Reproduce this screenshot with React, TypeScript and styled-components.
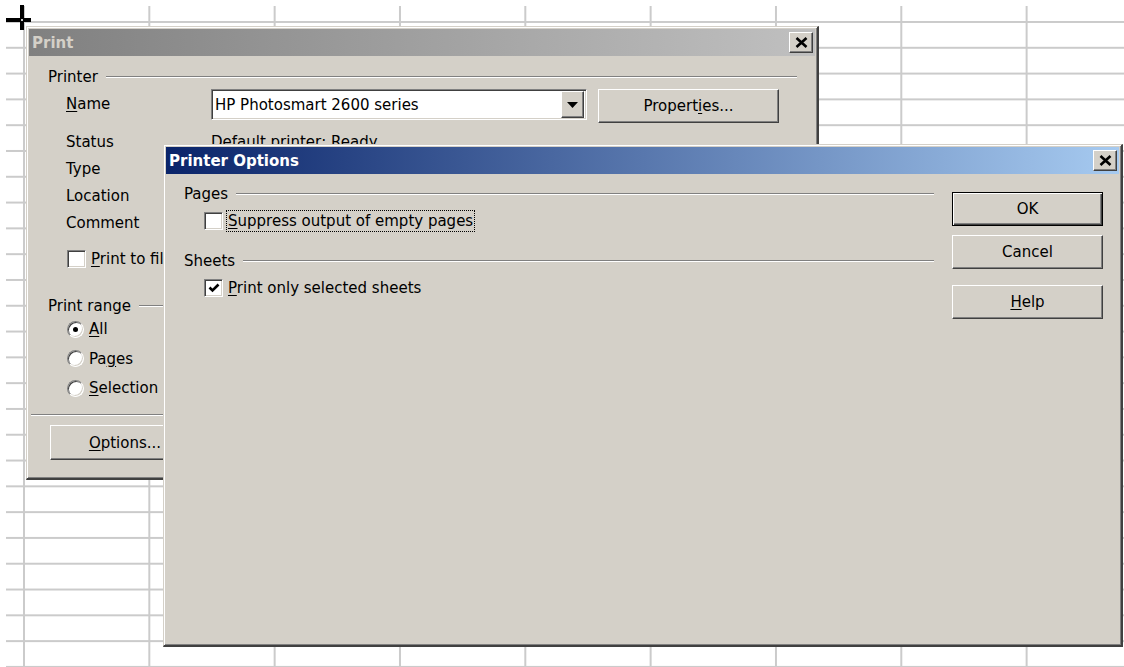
import React from 'react';
import styled, { createGlobalStyle, css } from 'styled-components';

const face = '#d4d0c8';
const shadow = '#808080';
const darkShadow = '#404040';

const GlobalStyle = createGlobalStyle`
  html, body {
    margin: 0;
    padding: 0;
    overflow: hidden;
    background: #fff;
  }

  body {
    font-family: "DejaVu Sans", "Liberation Sans", sans-serif;
    font-size: 15px;
    color: #000;
  }
`;

const Sheet = styled.div`
  position: relative;
  width: 1124px;
  height: 667px;
  overflow: hidden;
  background: #fff;
`;

/* spreadsheet cells behind the dialogs */
const Cells = styled.div`
  margin: 6px 0 0 6px;
  height: 661px;
  background-image:
    linear-gradient(to right, #cbcbcb 0 2px, transparent 2px),
    linear-gradient(to bottom, #cbcbcb 0 2px, transparent 2px);
  background-size: 125.33px 100%, 100% 25.8px;
  background-position: 17px 0, 0 15px;
  background-repeat: repeat-x, repeat-y;
`;

const Cursor = styled.svg`
  position: absolute;
  left: 4px;
  top: 3px;
`;

const Window = styled.section<{ $x: number; $y: number; $w: number; $h: number }>`
  position: absolute;
  left: ${p => p.$x}px;
  top: ${p => p.$y}px;
  width: ${p => p.$w}px;
  height: ${p => p.$h}px;
  box-sizing: border-box;
  display: flex;
  flex-direction: column;
  padding: 2px;
  background: ${face};
  border: 1px solid;
  border-width: 1px 2px 2px 1px;
  border-color: ${face} ${darkShadow} ${darkShadow} ${face};
  box-shadow: inset 1px 1px #fff, inset -1px -1px ${shadow};
`;

const TitleBar = styled.header<{ $active?: boolean }>`
  display: flex;
  align-items: center;
  justify-content: space-between;
  height: 27px;
  flex-shrink: 0;
  padding: 0 2px 0 3px;
  font-weight: bold;
  font-size: 15px;
  color: ${p => (p.$active ? '#fff' : face)};
  background: ${p =>
    p.$active
      ? 'linear-gradient(to right, #0a246a, #a6caf0)'
      : 'linear-gradient(to right, #808080, #c0c0c0)'};
`;

const raised = css`
  box-sizing: border-box;
  background: ${face};
  border: 1px solid;
  border-color: #fff ${darkShadow} ${darkShadow} #fff;
  box-shadow: inset -1px -1px ${shadow};
`;

const sunken = css`
  box-sizing: border-box;
  background: #fff;
  border: 1px solid;
  border-color: ${shadow} #fff #fff ${shadow};
  box-shadow: inset 1px 1px ${darkShadow}, inset -1px -1px ${face};
`;

const CloseButton = styled.button`
  ${raised};
  width: 24px;
  height: 21px;
  padding: 0;
  display: flex;
  align-items: center;
  justify-content: center;
`;

const Button = styled.button<{ $w?: number; $h?: number; $default?: boolean; $space?: number }>`
  ${raised};
  width: ${p => p.$w ?? 151}px;
  height: ${p => p.$h ?? 34}px;
  margin-top: ${p => p.$space ?? 0}px;
  padding: 0;
  font: inherit;
  color: #000;
  flex-shrink: 0;
  ${p =>
    p.$default &&
    css`
      border-color: #000;
      box-shadow: inset 1px 1px #fff, inset -1px -1px ${darkShadow}, inset -2px -2px ${shadow};
    `}
`;

const Key = styled.u`
  text-decoration-thickness: 1px;
  text-underline-offset: 2px;
`;

/* group frame heading with etched rule */
const GroupHead = styled.div<{ $space?: number }>`
  display: flex;
  align-items: center;
  gap: 8px;
  height: 18px;
  line-height: 18px;
  margin-top: ${p => p.$space ?? 0}px;
  white-space: nowrap;

  &::after {
    content: '';
    flex: 1;
    border-top: 1px solid ${shadow};
    border-bottom: 1px solid #fff;
  }
`;

const OptionRow = styled.label<{ $space?: number; $indent?: number }>`
  display: flex;
  align-items: center;
  gap: 5px;
  height: 22px;
  margin-top: ${p => p.$space ?? 0}px;
  margin-left: ${p => p.$indent ?? 0}px;
  white-space: nowrap;
`;

const Box = styled.span`
  ${sunken};
  width: 19px;
  height: 18px;
  flex-shrink: 0;
  display: flex;
  align-items: center;
  justify-content: center;
`;

const Radio = styled.span<{ $on?: boolean }>`
  ${sunken};
  width: 17px;
  height: 17px;
  border-radius: 50%;
  flex-shrink: 0;
  display: flex;
  align-items: center;
  justify-content: center;

  &::after {
    content: '';
    width: 5px;
    height: 5px;
    border-radius: 50%;
    background: ${p => (p.$on ? '#000' : 'transparent')};
  }
`;

const Focus = styled.span`
  outline: 1px dotted #000;
  outline-offset: 1px;
`;

/* ---- Print dialog ---- */

const PrintBody = styled.div`
  display: flex;
  flex-direction: column;
  padding: 12px 18px 0 19px;
`;

const NameRow = styled.div`
  display: flex;
  align-items: flex-start;
  margin: 3px 0 0 18px;
`;

const FieldLabel = styled.span<{ $w?: number; $lh?: number }>`
  width: ${p => p.$w ?? 145}px;
  line-height: ${p => p.$lh ?? 27}px;
  flex-shrink: 0;
  white-space: nowrap;
`;

const Combo = styled.div`
  ${sunken};
  width: 376px;
  height: 31px;
  display: flex;
  align-items: center;
  justify-content: space-between;
  padding: 2px 2px 2px 3px;
`;

const ComboArrow = styled.span`
  ${raised};
  width: 23px;
  height: 27px;
  display: flex;
  align-items: center;
  justify-content: center;
`;

const InfoGrid = styled.div`
  display: grid;
  grid-template-columns: 145px 1fr;
  grid-auto-rows: 27px;
  align-items: center;
  margin: 5px 0 0 18px;
  white-space: nowrap;
`;

const RadioList = styled.div`
  display: flex;
  flex-direction: column;
  gap: 7.5px;
  margin: 3px 0 0 19px;
`;

const Separator = styled.hr`
  margin: 15px -17px 0 -17px;
  height: 0;
  border: 0;
  border-top: 1px solid ${shadow};
  border-bottom: 1px solid #fff;
`;

/* ---- Printer Options dialog ---- */

const OptionsBody = styled.div`
  display: flex;
  gap: 18px;
  padding: 11px 16px 0 18px;
`;

const OptionGroups = styled.div`
  flex: 1;
  display: flex;
  flex-direction: column;
`;

const ButtonStack = styled.div`
  display: flex;
  flex-direction: column;
  padding-top: 7px;
`;

const CloseGlyph = () => (
  <svg width="13" height="11" viewBox="0 0 13 11">
    <path d="M1.5 1 11.5 10M11.5 1 1.5 10" stroke="#000" strokeWidth="2.6" fill="none" />
  </svg>
);

const Check = ({ checked }: { checked?: boolean }) => (
  <Box>
    {checked && (
      <svg width="12" height="12" viewBox="0 0 12 12">
        <path d="M1.5 5.5 4.5 8.5 10.5 2.5" stroke="#000" strokeWidth="2.6" fill="none" />
      </svg>
    )}
  </Box>
);

const App = () => (
  <Sheet>
    <GlobalStyle />
    <Cells />

    <Cursor width="28" height="28" viewBox="0 0 28 28">
      <rect x="2" y="15" width="25" height="4" fill="#000" />
      <rect x="16" y="2" width="4" height="25" fill="#000" />
      <rect x="17" y="16" width="2" height="2" fill="#ccc" />
    </Cursor>

    <Window $x={26} $y={26} $w={793} $h={454}>
      <TitleBar>
        Print
        <CloseButton>
          <CloseGlyph />
        </CloseButton>
      </TitleBar>
      <PrintBody>
        <GroupHead>Printer</GroupHead>
        <NameRow>
          <FieldLabel $lh={31}>
            <Key>N</Key>ame
          </FieldLabel>
          <Combo>
            HP Photosmart 2600 series
            <ComboArrow>
              <svg width="11" height="6" viewBox="0 0 11 6">
                <path d="M0 0h11L5.5 6z" fill="#000" />
              </svg>
            </ComboArrow>
          </Combo>
          <Button $w={181} style={{ marginLeft: 11 }}>
            Propert<Key>i</Key>es...
          </Button>
        </NameRow>
        <InfoGrid>
          <span>Status</span>
          <span>Default printer; Ready</span>
          <span>Type</span>
          <span />
          <span>Location</span>
          <span />
          <span>Comment</span>
          <span />
        </InfoGrid>
        <OptionRow $space={12} $indent={19}>
          <Check />
          <span>
            <Key>P</Key>rint to file
          </span>
        </OptionRow>

        <GroupHead $space={27}>Print range</GroupHead>
        <RadioList>
          <OptionRow>
            <Radio $on />
            <span>
              <Key>A</Key>ll
            </span>
          </OptionRow>
          <OptionRow>
            <Radio />
            <span>
              Pa<Key>g</Key>es
            </span>
          </OptionRow>
          <OptionRow>
            <Radio />
            <span>
              <Key>S</Key>election
            </span>
          </OptionRow>
        </RadioList>

        <Separator />
        <Button $w={150} $h={35} $space={9} style={{ marginLeft: 2 }}>
          <Key>O</Key>ptions...
        </Button>
      </PrintBody>
    </Window>

    <Window $x={163} $y={144} $w={960} $h={503}>
      <TitleBar $active>
        Printer Options
        <CloseButton>
          <CloseGlyph />
        </CloseButton>
      </TitleBar>
      <OptionsBody>
        <OptionGroups>
          <GroupHead>Pages</GroupHead>
          <OptionRow $space={7} $indent={20}>
            <Check />
            <Focus>
              <Key>S</Key>uppress output of empty pages
            </Focus>
          </OptionRow>
          <GroupHead $space={20}>Sheets</GroupHead>
          <OptionRow $space={7} $indent={20}>
            <Check checked />
            <span>
              <Key>P</Key>rint only selected sheets
            </span>
          </OptionRow>
        </OptionGroups>
        <ButtonStack>
          <Button $default>OK</Button>
          <Button $space={9}>Cancel</Button>
          <Button $space={16}>
            <Key>H</Key>elp
          </Button>
        </ButtonStack>
      </OptionsBody>
    </Window>
  </Sheet>
);

export default App;
